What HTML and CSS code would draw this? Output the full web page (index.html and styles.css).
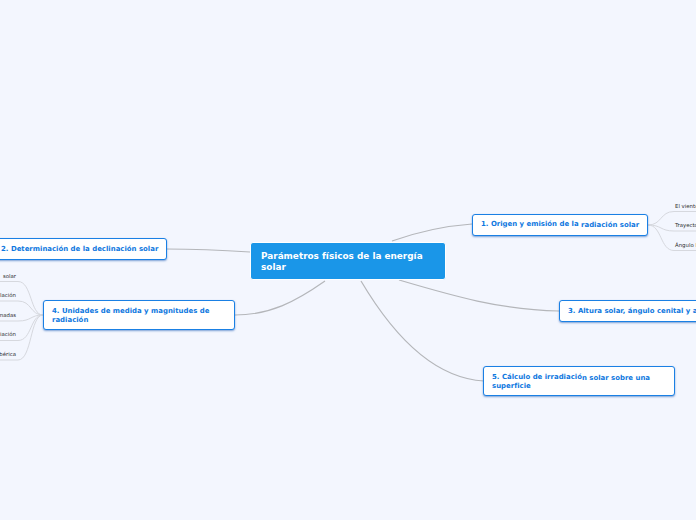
FILE: index.html
```html
<!DOCTYPE html>
<html lang="es">
<head>
<meta charset="utf-8">
<title>Parámetros físicos de la energía solar</title>
<link rel="stylesheet" href="styles.css">
</head>
<body>
<main class="map">
  <svg class="links" width="696" height="520" viewBox="0 0 696 520" aria-hidden="true">
    <g class="main-links">
      <path d="M392 241C420 231 445 226 472 224"/>
      <path d="M250 252C220 250 195 249 166 249"/>
      <path d="M399 280C450 295 500 310 559 311"/>
      <path d="M325 281C295 302 270 315 235 315"/>
      <path d="M361 281C390 330 430 378 484 381"/>
    </g>
    <g class="leaf-links">
      <path d="M648 225C662 225 660 211.5 674 211.5H696"/>
      <path d="M648 225C662 225 660 231 674 231H696"/>
      <path d="M648 225C662 225 660 250.5 674 250.5H696"/>
      <path d="M43 315C30 315 32 281.5 18 281.5H0"/>
      <path d="M43 315C30 315 32 301 18 301H0"/>
      <path d="M43 315C30 315 32 321 18 321H0"/>
      <path d="M43 315C30 315 32 340.5 18 340.5H0"/>
      <path d="M43 315C30 315 32 360 18 360H0"/>
    </g>
  </svg>

  <h1 class="node root">Parámetros físicos de la energía solar</h1>

  <div class="node topic t1">1. Origen y emisión de la <span class="shifted">radiación solar</span></div>
  <div class="node topic t2">2. Determinación de la declinación solar</div>
  <div class="node topic t3">3. Altura solar, ángulo cenital y acimut</div>
  <div class="node topic t4">4. Unidades de medida y magnitudes de radiación</div>
  <div class="node topic t5">5. Cálculo de irradiació<span class="shifted">n solar sobre una</span><br>superficie</div>

  <span class="leaf right-side r1">El viento solar</span>
  <span class="leaf right-side r2">Trayectoria</span>
  <span class="leaf right-side r3">Ángulo horario</span>

  <span class="leaf left-side l1">solar</span>
  <span class="leaf left-side l2">lación</span>
  <span class="leaf left-side l3">madas</span>
  <span class="leaf left-side l4">iación</span>
  <span class="leaf left-side l5">bérica</span>
</main>
</body>
</html>
```

FILE: styles.css
```css
html, body {
  margin: 0;
  padding: 0;
  height: 100%;
  overflow: hidden;
  background: #f3f6fe;
}

.map {
  position: relative;
  width: 696px;
  height: 520px;
  overflow: hidden;
  font-family: "DejaVu Sans", Verdana, sans-serif;
}

.links {
  position: absolute;
  left: 0;
  top: 0;
}

.links path {
  fill: none;
}

.main-links path {
  stroke: #b4b6ba;
  stroke-width: 1.2;
}

.leaf-links path {
  stroke: #d6d8de;
  stroke-width: 1;
}

.node {
  position: absolute;
  box-sizing: border-box;
  margin: 0;
  font-weight: 700;
}

.root {
  left: 250px;
  top: 242px;
  width: 196px;
  height: 38px;
  padding: 8px 10px;
  background: #1a96e8;
  border: 1px solid #ffffff;
  border-radius: 3px;
  color: #ffffff;
  font-size: 8.9px;
  line-height: 11px;
}

.topic {
  height: 22px;
  padding: 0 8px;
  background: #ffffff;
  border: 1px solid #1a80e4;
  border-radius: 3px;
  box-shadow: 0 1px 2px rgba(26, 90, 180, 0.55);
  color: #0e78e0;
  font-size: 6.95px;
  line-height: 19px;
  white-space: nowrap;
}

.shifted {
  position: relative;
  top: 1px;
}

.t1 { left: 472px; top: 214px; width: 176px; }
.t2 { left: -8px; top: 238px; width: 175px; line-height: 21px; }
.t3 { left: 559px; top: 300px; width: 200px; line-height: 21px; }
.t4 { left: 43px; top: 300px; width: 192px; height: 30px; line-height: 9px; padding-top: 6px; white-space: normal; }
.t5 { left: 483px; top: 366px; width: 192px; height: 30px; line-height: 9px; padding-top: 6px; white-space: normal; }

.leaf {
  position: absolute;
  font-size: 5.4px;
  line-height: 8px;
  color: #2e2e30;
  white-space: nowrap;
}

.right-side { left: 675px; }
.left-side { right: 680px; }

.r1 { top: 202px; }
.r2 { top: 221px; }
.r3 { top: 241px; }
.l1 { top: 272px; }
.l2 { top: 291px; }
.l3 { top: 311px; }
.l4 { top: 330px; }
.l5 { top: 350px; }
```
